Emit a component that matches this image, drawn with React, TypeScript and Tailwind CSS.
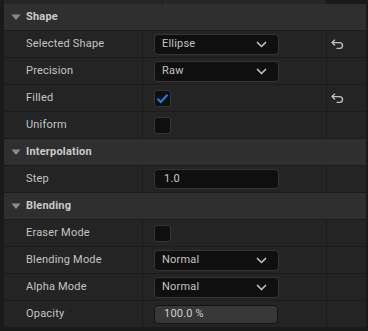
import React from 'react'

const FONT = { fontFamily: 'Roboto, "Noto Sans", sans-serif' }

function Caret() {
  return (
    <svg width="10" height="7" viewBox="0 0 10 7" className="shrink-0">
      <path d="M0.5 0.5 L9.5 0.5 L5 6 Z" fill="#8c8c8c" />
    </svg>
  )
}

function Chevron() {
  return (
    <svg width="11" height="7" viewBox="0 0 11 7" className="shrink-0">
      <path d="M1 1 L5.5 5.5 L10 1" fill="none" stroke="#c8c8c8" strokeWidth="1.5" />
    </svg>
  )
}

function ResetIcon() {
  return (
    <svg width="13" height="11" viewBox="0 0 13 11">
      <path d="M4 0.8 L1 3.6 L4 6.4" fill="none" stroke="#c0c0c0" strokeWidth="1.4" strokeLinejoin="round" />
      <path d="M1.4 3.6 H8.6 A2.9 2.9 0 0 1 8.6 9.4 H5.5" fill="none" stroke="#c0c0c0" strokeWidth="1.4" />
    </svg>
  )
}

function Header({ label }: { label: string }) {
  return (
    <div className="h-[27px] flex items-center bg-[#2f2f2f] border-b border-[#1b1b1b]">
      <div className="w-[22px] flex justify-center pl-[1px]">
        <Caret />
      </div>
      <span className="text-[11px] font-bold tracking-[0.2px] text-[#cacaca]">{label}</span>
    </div>
  )
}

function Row({ label, children, reset }: { label: string; children?: React.ReactNode; reset?: boolean }) {
  return (
    <div className="h-[27px] flex bg-[#242424] border-b border-[#1b1b1b]">
      <div className="w-[139px] shrink-0 flex items-center pl-[22px] border-r border-[#1b1b1b]">
        <span className="text-[11px] tracking-[0.2px] text-[#c4c4c4]">{label}</span>
      </div>
      <div className="w-[184px] shrink-0 flex items-center pl-[11px] border-r border-[#1b1b1b]">
        {children}
      </div>
      <div className="flex-1 flex items-center pl-[4px]">{reset && <ResetIcon />}</div>
    </div>
  )
}

function Select({ value }: { value: string }) {
  return (
    <div className="w-[125px] h-[21px] flex items-center justify-between pl-[7px] pr-[11px] bg-[#0f0f0f] border border-[#363636] rounded-[4px]">
      <span className="text-[11px] tracking-[0.2px] text-[#c4c4c4]">{value}</span>
      <Chevron />
    </div>
  )
}

function Check({ checked }: { checked?: boolean }) {
  return (
    <div className="w-[17px] h-[17px] flex items-center justify-center bg-[#0f0f0f] border border-[#363636] rounded-[3px]">
      {checked && (
        <svg width="13" height="11" viewBox="0 0 13 11">
          <path d="M1.5 5.8 L4.8 9 L11.5 1.8" fill="none" stroke="#1f7fe8" strokeWidth="2" />
        </svg>
      )}
    </div>
  )
}

function TextBox({ value }: { value: string }) {
  return (
    <div className="w-[125px] h-[20px] flex items-center pl-[9px] bg-[#0f0f0f] border border-[#363636] rounded-[4px]">
      <span className="text-[11px] tracking-[0.2px] text-[#c8c8c8]">{value}</span>
    </div>
  )
}

function SpinBox({ value }: { value: string }) {
  return (
    <div className="w-[124px] h-[19px] flex items-center pl-[9px] bg-[#383838] border border-[#121212] rounded-[4px]">
      <span className="text-[11px] tracking-[0.2px] text-[#d0d0d0]">{value}</span>
    </div>
  )
}

export default function App() {
  return (
    <div className="w-[368px] h-[331px] bg-[#1a1a1a] overflow-hidden" style={FONT}>
      {/* cut-off row above */}
      <div className="h-[4px] flex pl-[4px]">
        <div className="w-[159px] bg-[#262626] border-r border-[#1b1b1b]" />
        <div className="w-[163px] bg-[#262626]" />
      </div>
      <div className="ml-[4px] w-[362px]">
        <Header label="Shape" />
        <Row label="Selected Shape" reset>
          <Select value="Ellipse" />
        </Row>
        <Row label="Precision">
          <Select value="Raw" />
        </Row>
        <Row label="Filled" reset>
          <Check checked />
        </Row>
        <Row label="Uniform">
          <Check />
        </Row>
        <Header label="Interpolation" />
        <Row label="Step">
          <TextBox value="1.0" />
        </Row>
        <Header label="Blending" />
        <Row label="Eraser Mode">
          <Check />
        </Row>
        <Row label="Blending Mode">
          <Select value="Normal" />
        </Row>
        <Row label="Alpha Mode">
          <Select value="Normal" />
        </Row>
        <Row label="Opacity">
          <SpinBox value="100.0 %" />
        </Row>
      </div>
    </div>
  )
}
